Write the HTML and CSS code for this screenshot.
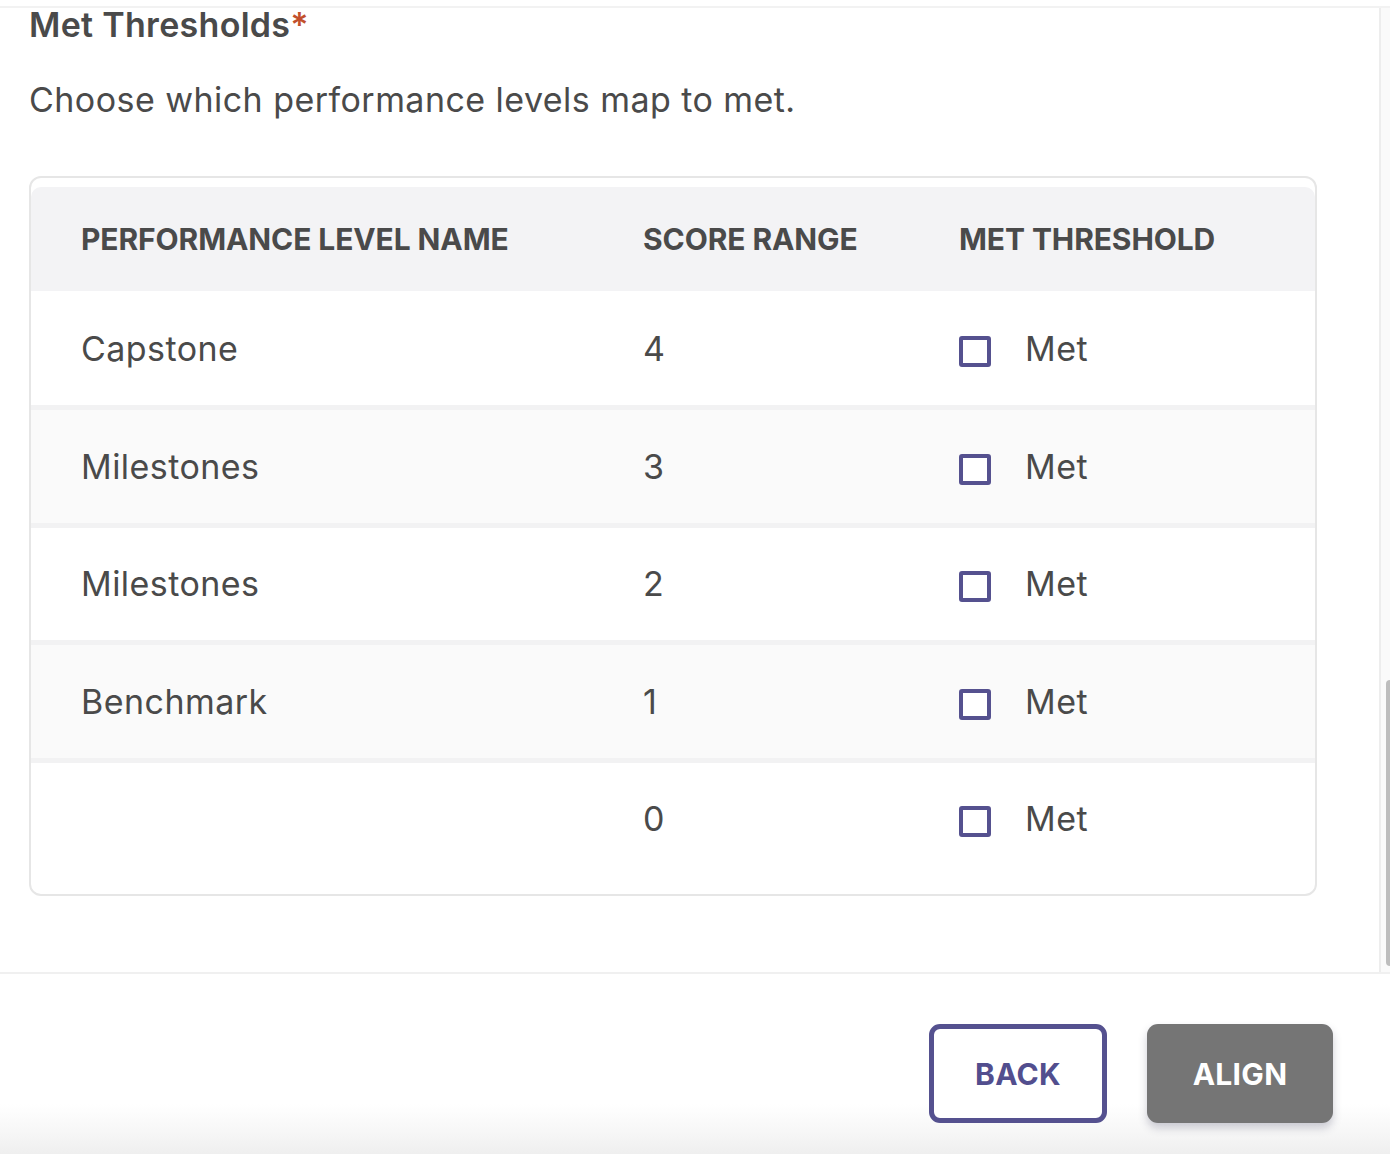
FILE: index.html
```html
<!DOCTYPE html>
<html lang="en">
<head>
<meta charset="utf-8">
<title>Met Thresholds</title>
<link rel="stylesheet" href="styles.css">
</head>
<body>
<div class="page">
  <div class="topbar"></div>
  <div class="main">
    <div class="content">
      <h2 class="title">Met Thresholds<span class="req">*</span></h2>
      <p class="desc">Choose which performance levels map to met.</p>
      <div class="card">
        <div class="table">
          <div class="row head">
            <div class="cell">PERFORMANCE LEVEL NAME</div>
            <div class="cell">SCORE RANGE</div>
            <div class="cell">MET THRESHOLD</div>
          </div>
          <div class="row">
            <div class="cell">Capstone</div>
            <div class="cell">4</div>
            <div class="cell"><label class="check"><span class="box"></span>Met</label></div>
          </div>
          <div class="row alt">
            <div class="cell">Milestones</div>
            <div class="cell">3</div>
            <div class="cell"><label class="check"><span class="box"></span>Met</label></div>
          </div>
          <div class="row">
            <div class="cell">Milestones</div>
            <div class="cell">2</div>
            <div class="cell"><label class="check"><span class="box"></span>Met</label></div>
          </div>
          <div class="row alt">
            <div class="cell">Benchmark</div>
            <div class="cell">1</div>
            <div class="cell"><label class="check"><span class="box"></span>Met</label></div>
          </div>
          <div class="row last">
            <div class="cell"></div>
            <div class="cell">0</div>
            <div class="cell"><label class="check"><span class="box"></span>Met</label></div>
          </div>
        </div>
      </div>
    </div>
    <div class="track"><div class="thumb"></div></div>
  </div>
  <div class="footer">
    <button class="btn back">BACK</button>
    <button class="btn align">ALIGN</button>
  </div>
</div>
</body>
</html>
```
FILE: styles.css
```css
* { box-sizing: border-box; }
html, body { margin: 0; padding: 0; background: #ffffff; }
body {
  font-family: Inter, "Noto Sans", "Liberation Sans", sans-serif;
  color: #4a4a4a;
}
.page {
  width: 1390px;
  height: 1154px;
  display: flex;
  flex-direction: column;
  overflow: hidden;
}
.topbar {
  height: 8px;
  border-bottom: 2px solid #f2f2f2;
  flex: none;
}
.main {
  flex: 1;
  display: flex;
  min-height: 0;
}
.content {
  flex: 1;
  padding: 0 62px 0 29px;
}
.title {
  margin: 0;
  font-size: 34px;
  line-height: 34px;
  font-weight: 600;
  letter-spacing: 0.3px;
  color: #4a4a4a;
}
.req { color: #c2502c; }
.desc {
  margin: 41px 0 0;
  font-size: 34px;
  line-height: 34px;
  font-weight: 400;
  letter-spacing: 0.45px;
}
.card {
  margin-top: 59px;
  border: 2px solid #e6e6e6;
  border-radius: 12px;
  padding: 9px 0 19px;
}
.row {
  display: grid;
  grid-template-columns: 562px 316px 1fr;
  align-items: center;
  height: 117.5px;
  border-top: 5px solid #f2f2f3;
  font-size: 34px;
  letter-spacing: 0.45px;
}
.row .cell { padding-left: 50px; }
.row.head {
  height: 104px;
  border-top: 0;
  background: #f3f3f5;
  border-radius: 10px 10px 0 0;
  font-size: 30px;
  font-weight: 700;
  letter-spacing: -0.1px;
}
.row.head + .row { border-top: 0; height: 114px; }
.row.alt { background: #fafafa; }
.check {
  display: flex;
  align-items: center;
  gap: 34px;
}
.box {
  width: 32px;
  height: 31px;
  margin-top: 6px;
  border: 4px solid #55518f;
  border-radius: 3px;
  background: #fff;
  flex: none;
}
.track {
  width: 11px;
  border-left: 2px solid #ededed;
  background: #fafafa;
  display: flex;
  flex-direction: column;
  justify-content: flex-end;
  padding: 0 0 6px 5px;
}
.thumb {
  height: 286px;
  width: 4px;
  background: #bdbdbd;
  border-radius: 4px 0 0 4px;
}
.footer {
  flex: none;
  height: 182px;
  border-top: 2px solid #f0f0f0;
  display: flex;
  justify-content: flex-end;
  align-items: flex-start;
  gap: 40px;
  padding: 50px 57px 0 0;
  background: linear-gradient(to bottom, #ffffff 0, #ffffff 130px, #f6f6f6 160px, #eeeeee 182px);
}
.btn {
  height: 99px;
  font-family: Inter, "Noto Sans", "Liberation Sans", sans-serif;
  font-size: 30px;
  font-weight: 700;
  letter-spacing: 0.3px;
  border-radius: 11px;
  cursor: pointer;
}
.back {
  width: 178px;
  background: #fff;
  border: 5px solid #55518f;
  color: #524e8e;
}
.align {
  width: 186px;
  background: #757575;
  border: 0;
  color: #ffffff;
  box-shadow: 0 5px 8px rgba(60, 60, 90, 0.25);
}
```
